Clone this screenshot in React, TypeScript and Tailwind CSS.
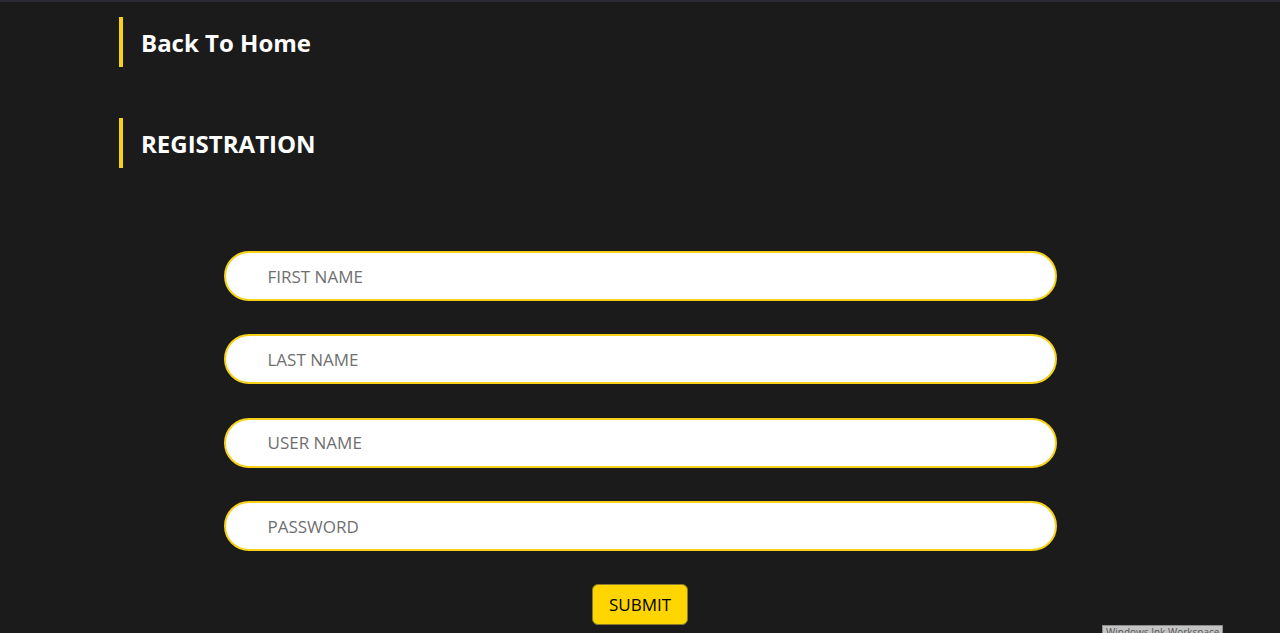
import React from 'react';

const fields = ['FIRST NAME', 'LAST NAME', 'USER NAME', 'PASSWORD'];

const Heading: React.FC<{ children: React.ReactNode }> = ({ children }) => (
  <div className="flex items-center h-[50px] border-l-4 border-[#f7d117] pl-[18px] pt-[2px]">
    <h2 className="text-[24px] font-bold text-white leading-none">{children}</h2>
  </div>
);

const App: React.FC = () => {
  return (
    <div
      className="relative min-h-[633px] h-[633px] overflow-hidden bg-[#1b1b1b] border-t-2 border-[#2b2b36]"
      style={{ fontFamily: '"Open Sans", "Noto Sans", sans-serif' }}
    >
      <div className="pl-[119px] pt-[15px] flex flex-col gap-[51px]">
        <Heading>Back To Home</Heading>
        <Heading>REGISTRATION</Heading>
      </div>

      <form className="mt-[83px] flex flex-col items-center" onSubmit={e => e.preventDefault()}>
        <div className="w-[833px] flex flex-col gap-[33.4px]">
          {fields.map(f => (
            <input
              key={f}
              type={f === 'PASSWORD' ? 'password' : 'text'}
              placeholder={f}
              className="h-[50px] w-full rounded-full bg-white border-2 border-[#f7d117] pl-[42px] text-[17px] font-medium text-gray-800 placeholder:text-[#6f6f6f] outline-none"
            />
          ))}
        </div>
        <button
          type="submit"
          className="mt-[33px] h-[41px] w-[96px] rounded-md bg-[#ffd500] border border-[#8a7a30] text-[17px] font-medium text-black"
        >
          SUBMIT
        </button>
      </form>

      <div className="absolute left-[1102px] top-[623px] px-[3px] bg-[#c4c4c4] border border-[#8c8c8c] text-[10px] leading-[12px] text-[#555] whitespace-nowrap">
        Windows Ink Workspace
      </div>
    </div>
  );
};

export default App;
